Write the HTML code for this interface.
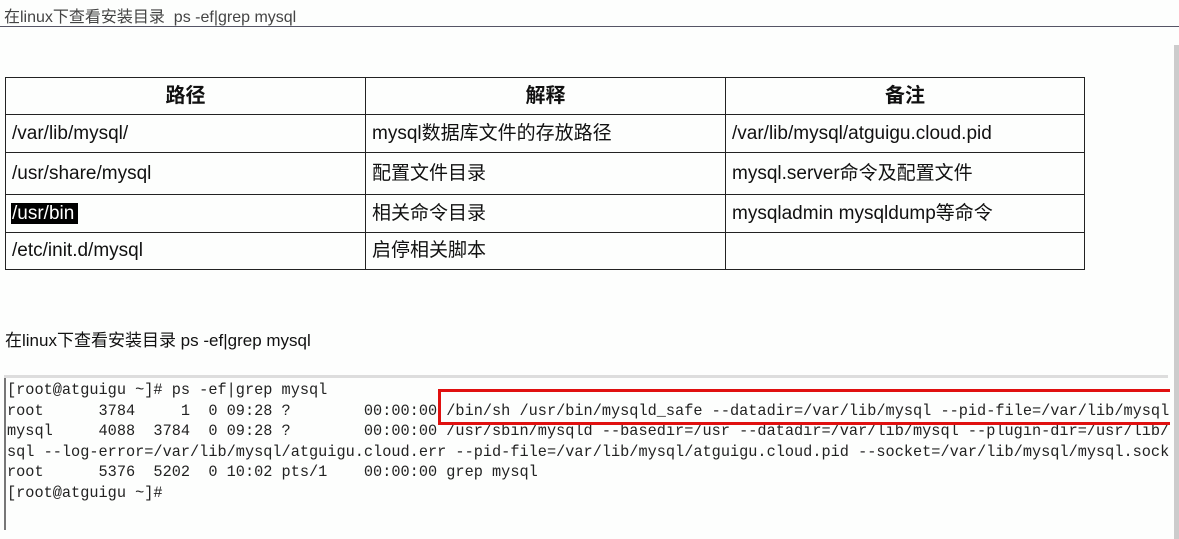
<!DOCTYPE html>
<html><head><meta charset="utf-8"><style>
*{margin:0;padding:0;box-sizing:border-box}
body{width:1179px;height:539px;background:#fdfefd;position:relative;overflow:hidden;font-family:"Liberation Sans","Noto Sans CJK SC",sans-serif;color:#111}
.abs{position:absolute}
table{position:absolute;left:5px;top:77px;border-collapse:collapse;width:1080px;font-size:19px;table-layout:fixed}
td{border:1.5px solid #222;padding:0 0 0 6px;white-space:nowrap;vertical-align:middle;line-height:22px;overflow:hidden}
th{border:1.5px solid #222;font-weight:bold;font-size:20px;height:37px;line-height:22px}
.mono{font-family:"Liberation Mono","Noto Sans CJK SC",monospace;font-size:15.25px;line-height:20.5px;color:#222;white-space:pre}
</style></head><body>
<div class="abs" style="left:4px;top:3px;font-size:16px;color:#444">在linux下查看安装目录 &nbsp;ps -ef|grep mysql</div>
<div class="abs" style="left:0;top:26px;width:1179px;height:1px;background:#556"></div>
<div class="abs" style="left:1174px;top:45px;width:5px;height:494px;background:#ccc"></div>
<table>
<tr><th style="width:360px">路径</th><th style="width:360px">解释</th><th>备注</th></tr>
<tr style="height:38px"><td>/var/lib/mysql/</td><td>mysql数据库文件的存放路径</td><td>/var/lib/mysql/atguigu.cloud.pid</td></tr>
<tr style="height:42px"><td>/usr/share/mysql</td><td>配置文件目录</td><td>mysql.server命令及配置文件</td></tr>
<tr style="height:38px"><td style="padding-left:5px"><span style="background:#000;color:#fff;padding:0 4px 0 1px">/usr/bin</span></td><td>相关命令目录</td><td>mysqladmin mysqldump等命令</td></tr>
<tr style="height:37px"><td>/etc/init.d/mysql</td><td>启停相关脚本</td><td></td></tr>
</table>
<div class="abs" style="left:5px;top:326px;font-size:17px;color:#111">在linux下查看安装目录 ps -ef|grep mysql</div>
<div class="abs" style="left:4px;top:375px;width:1164px;height:3px;background:#ddd"></div>
<div class="abs" style="left:4px;top:378px;width:2px;height:152px;background:#777"></div>
<div class="abs" style="left:7px;top:380px;width:1163px;height:150px;overflow:hidden"><div class="mono">[root@atguigu ~]# ps -ef|grep mysql
root      3784     1  0 09:28 ?        00:00:00 /bin/sh /usr/bin/mysqld_safe --datadir=/var/lib/mysql --pid-file=/var/lib/mysql
mysql     4088  3784  0 09:28 ?        00:00:00 /usr/sbin/mysqld --basedir=/usr --datadir=/var/lib/mysql --plugin-dir=/usr/lib/
sql --log-error=/var/lib/mysql/atguigu.cloud.err --pid-file=/var/lib/mysql/atguigu.cloud.pid --socket=/var/lib/mysql/mysql.sock
root      5376  5202  0 10:02 pts/1    00:00:00 grep mysql
[root@atguigu ~]#</div></div>
<div class="abs" style="left:438px;top:389px;width:732px;height:36px;border:3px solid #e01010;border-right:none"></div>
</body></html>
